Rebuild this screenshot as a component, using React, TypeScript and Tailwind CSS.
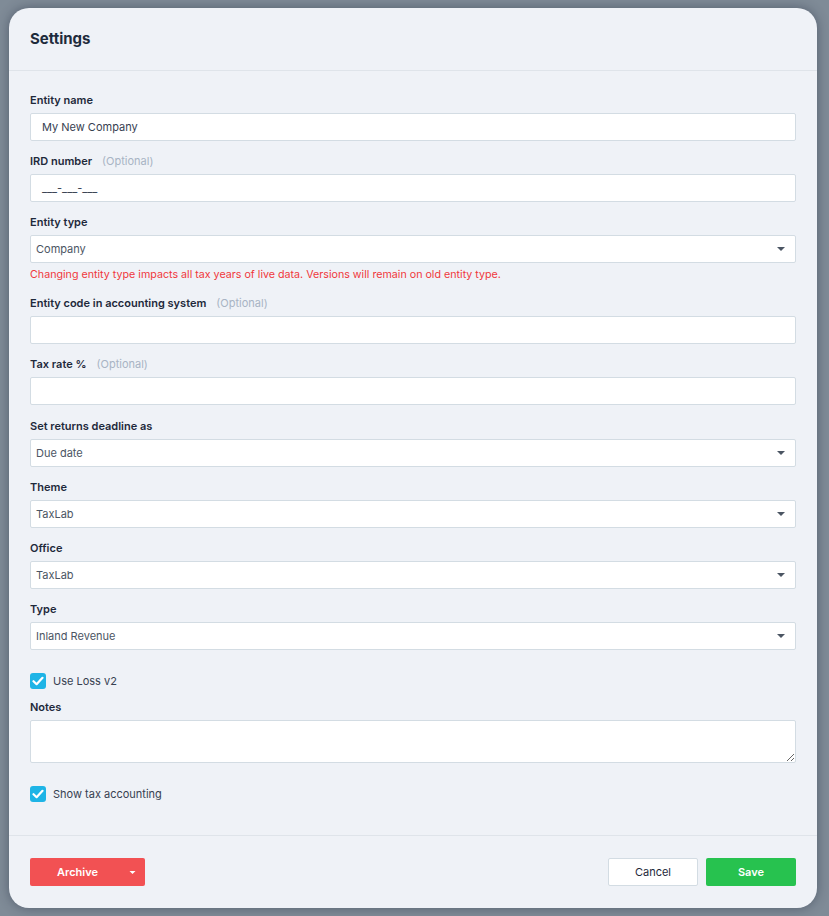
import type { ReactNode } from "react";

const font = { fontFamily: "Inter, 'Noto Sans', sans-serif" };

function Caret({ className }: { className: string }) {
  return (
    <svg className={className} height="4" viewBox="0 0 8 4" width="8">
      <path d="M0 0h8L4 4z" fill="currentColor" />
    </svg>
  );
}

function Check() {
  return (
    <span className="flex h-4 w-4 items-center justify-center rounded-[3px] bg-[#1eb4e6]">
      <svg fill="none" height="10" viewBox="0 0 12 10" width="12">
        <path
          d="M1.5 5.2 4.6 8.2 10.5 1.8"
          stroke="white"
          strokeLinecap="round"
          strokeLinejoin="round"
          strokeWidth="2.2"
        />
      </svg>
    </span>
  );
}

function Field({
  label,
  optional,
  children,
  note,
  className = "mb-3",
}: {
  label: string;
  optional?: boolean;
  children: ReactNode;
  note?: string;
  className?: string;
}) {
  return (
    <div className={className}>
      <div className="mb-[5px] flex h-4 items-center text-[11px] font-semibold text-[#1e293b]">
        {label}
        {optional && (
          <span className="ml-[10px] font-normal text-[#a8b4c4]">(Optional)</span>
        )}
      </div>
      {children}
      {note && (
        <p className="mt-[4px] mb-[4px] h-4 text-[10.7px] leading-4 text-[#f0383c]">{note}</p>
      )}
    </div>
  );
}

function TextInput({ value, placeholder }: { value?: string; placeholder?: string }) {
  return (
    <div className="flex h-7 items-center rounded-[2px] border border-[#d3dce3] bg-white px-[11px] text-[11px] text-[#374151]">
      {value ?? <span className="text-[#374151]">{placeholder}</span>}
    </div>
  );
}

function Select({ value }: { value: string }) {
  return (
    <div className="flex h-7 items-center justify-between rounded-[2px] border border-[#d3dce3] bg-white pl-[5px] pr-[10px] text-[11px] text-[#4b5563]">
      <span>{value}</span>
      <Caret className="text-[#4b5563]" />
    </div>
  );
}

function CheckRow({ label }: { label: string }) {
  return (
    <div className="flex h-4 items-center gap-[7px] text-[11px] text-[#374151]">
      <Check />
      {label}
    </div>
  );
}

export default function App() {
  return (
    <div className="min-h-[916px] bg-[#7f8b97] px-[9px] pt-[8px]" style={font}>
      <div className="w-[808px] overflow-hidden rounded-[20px] bg-[#eff2f7] shadow-[0_0_12px_rgba(30,41,59,0.45)]">
        <div className="flex h-[63px] items-center border-b border-[#dfe4ea] px-[21px]">
          <h2 className="text-[15px] font-bold text-[#1e2b3c]">Settings</h2>
        </div>

        <div className="px-[21px] pt-[21px] pb-[33px]">
          <Field label="Entity name">
            <TextInput value="My New Company" />
          </Field>
          <Field label="IRD number" optional>
            <TextInput placeholder="___-___-___" />
          </Field>
          <Field
            label="Entity type"
            note="Changing entity type impacts all tax years of live data. Versions will remain on old entity type."
          >
            <Select value="Company" />
          </Field>
          <Field label="Entity code in accounting system" optional>
            <TextInput value="" />
          </Field>
          <Field className="mb-[13px]" label="Tax rate %" optional>
            <TextInput value="" />
          </Field>
          <Field label="Set returns deadline as">
            <Select value="Due date" />
          </Field>
          <Field label="Theme">
            <Select value="TaxLab" />
          </Field>
          <Field label="Office">
            <Select value="TaxLab" />
          </Field>
          <Field label="Type">
            <Select value="Inland Revenue" />
          </Field>

          <div className="mt-[23px] mb-[10px]">
            <CheckRow label="Use Loss v2" />
          </div>

          <div className="mb-[23px]">
            <div className="mb-[5px] flex h-4 items-center text-[11px] font-semibold text-[#1e293b]">
              Notes
            </div>
            <textarea className="block h-[43px] w-full resize-y rounded-[2px] border border-[#d3dce3] bg-white px-3 py-1 text-[11px] outline-none" />
          </div>

          <CheckRow label="Show tax accounting" />
        </div>

        <div className="flex items-center justify-between border-t border-[#dfe4ea] px-[21px] py-[22px]">
          <div className="flex h-7 w-[115px] items-center rounded-[2px] bg-[#f25153] text-[11px] font-semibold text-white">
            <span className="flex-1 pl-[6px] text-center">Archive</span>
            <span className="flex w-[26px] justify-center">
              <Caret className="h-[3px] w-[7px] text-white" />
            </span>
          </div>
          <div className="flex gap-2">
            <button className="h-7 w-[90px] rounded-[2px] border border-[#d3dce3] bg-white text-[11px] text-[#1e293b]">
              Cancel
            </button>
            <button className="h-7 w-[90px] rounded-[2px] bg-[#27c24f] text-[11px] font-semibold text-white">
              Save
            </button>
          </div>
        </div>
      </div>
    </div>
  );
}
